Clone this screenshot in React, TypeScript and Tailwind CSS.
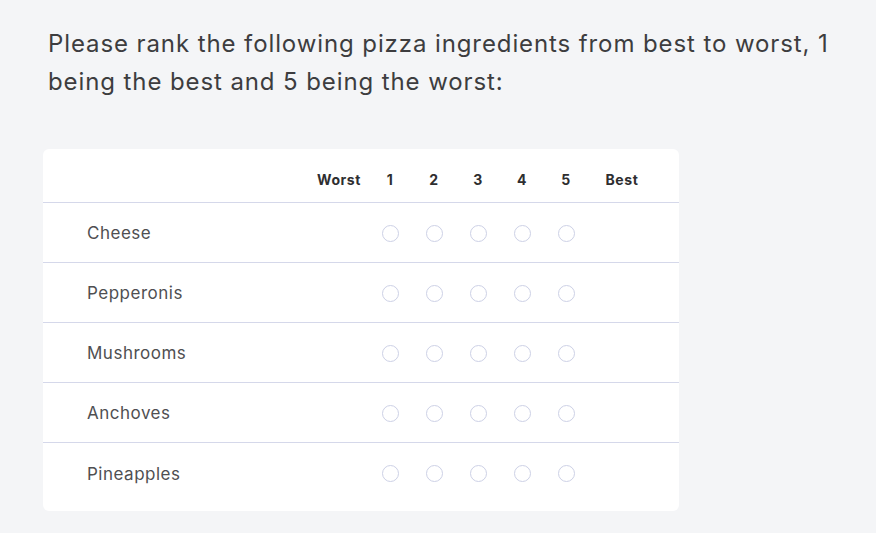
import React from "react";

const ITEMS = ["Cheese", "Pepperonis", "Mushrooms", "Anchoves", "Pineapples"];
const RANKS = [1, 2, 3, 4, 5];

const GRID = "grid grid-cols-[267px_58px_44px_44px_44px_44px_44px_68px_23px]";

export default function App() {
  return (
    <div
      className="min-h-[533px] w-[876px] bg-[#f4f5f7] pt-[25px] pl-[48px]"
      style={{ fontFamily: "Inter, 'Open Sans', sans-serif" }}
    >
      <h1 className="w-[800px] text-[24px] leading-[38px] tracking-[0.9px] text-[#3d3d3f]">
        Please rank the following pizza ingredients from best to worst, 1 being the best and 5 being the
        worst:
      </h1>

      <div className="mt-[48px] -ml-[5px] w-[636px] rounded-[6px] bg-white pb-[8px]">
        <div className={`${GRID} h-[54px] items-center border-b border-[#d5d8ea] pt-[7px] text-[14px] font-bold tracking-[0.6px] text-[#2e2e30]`}>
          <div />
          <div className="text-center">Worst</div>
          {RANKS.map((r) => (
            <div key={r} className="text-center">
              {r}
            </div>
          ))}
          <div className="text-center">Best</div>
          <div />
        </div>

        {ITEMS.map((item, i) => (
          <div
            key={item}
            className={`${GRID} h-[60px] items-center ${
              i < ITEMS.length - 1 ? "border-b border-[#d5d8ea]" : ""
            }`}
          >
            <div className="pl-[44px] pt-[3px] text-[17px] tracking-[0.5px] text-[#4f4f52]">{item}</div>
            <div />
            {RANKS.map((r) => (
              <div key={r} className="flex justify-center pt-[1px]">
                <span className="block size-[17px] rounded-full border border-[#cdd1e6] bg-white" />
              </div>
            ))}
            <div />
            <div />
          </div>
        ))}
      </div>
    </div>
  );
}
